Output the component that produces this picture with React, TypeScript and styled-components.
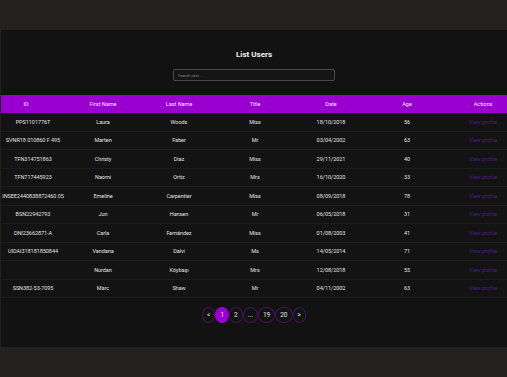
import styled, { createGlobalStyle } from 'styled-components';

const users = [
  { id: 'PPS1101776T', first: 'Laura', last: 'Woods', title: 'Miss', date: '18/10/2018', age: 56 },
  { id: 'SVNR18 010860 F 495', first: 'Marten', last: 'Faber', title: 'Mr', date: '03/04/2002', age: 63 },
  { id: 'TFN314751863', first: 'Christy', last: 'Diaz', title: 'Miss', date: '29/11/2021', age: 40 },
  { id: 'TFN717445923', first: 'Naomi', last: 'Ortiz', title: 'Mrs', date: '16/10/2020', age: 33 },
  { id: 'INSEE2440838872460 05', first: 'Emeline', last: 'Carpentier', title: 'Miss', date: '08/09/2018', age: 78 },
  { id: 'BSN22942793', first: 'Jun', last: 'Hansen', title: 'Mr', date: '06/05/2018', age: 31 },
  { id: 'DNI23662871-A', first: 'Carla', last: 'Fernández', title: 'Miss', date: '01/08/2003', age: 41 },
  { id: 'UIDAI318181850844', first: 'Vandana', last: 'Dalvi', title: 'Ms', date: '14/05/2014', age: 71 },
  { id: '', first: 'Nurdan', last: 'Köybaşı', title: 'Mrs', date: '12/08/2018', age: 55 },
  { id: 'SSN382-53-7095', first: 'Marc', last: 'Shaw', title: 'Mr', date: '04/11/2002', age: 63 }
];

const headers = ['ID', 'First Name', 'Last Name', 'Title', 'Date', 'Age', 'Actions'];
const pages = ['<', '1', '2', '...', '19', '20', '>'];

const GlobalStyle = createGlobalStyle`
  body {
    margin: 0;
    background: #222120;
    font-family: Roboto, "Liberation Sans", sans-serif;
    color: #e4e4e4;
    overflow: hidden;
  }
`;

const App = () => {
  return (
    <>
      <GlobalStyle />
      <TopBand />
      <Panel>
        <Title>List Users</Title>
        <Search placeholder='Search user...' />
        <Table>
          <HeadRow>
            {headers.map((h) => (
              <HeadCell key={h}>{h}</HeadCell>
            ))}
          </HeadRow>
          {users.map((u, i) => (
            <Row key={i}>
              <Cell>{u.id}</Cell>
              <Cell>{u.first}</Cell>
              <Cell>{u.last}</Cell>
              <Cell>{u.title}</Cell>
              <Cell>{u.date}</Cell>
              <Cell>{u.age}</Cell>
              <Cell>
                <ProfileLink>View profile</ProfileLink>
              </Cell>
            </Row>
          ))}
        </Table>
        <Pager>
          {pages.map((p, i) => (
            <PageButton key={i} $active={p === '1'}>
              {p}
            </PageButton>
          ))}
        </Pager>
      </Panel>
    </>
  );
};

export default App;

const TopBand = styled.div`
  height: 30px;
`;

const Panel = styled.div`
  margin-left: 1px;
  height: 317px;
  background: #121212;
  display: flex;
  flex-direction: column;
  align-items: center;
  overflow: hidden;
`;

const Title = styled.div`
  margin-top: 20px;
  height: 10px;
  line-height: 10px;
  font-size: 8px;
  font-weight: 700;
  color: #f2f2f2;
`;

const Search = styled.input`
  box-sizing: border-box;
  margin-top: 9px;
  width: 162px;
  height: 12px;
  padding: 0 4px;
  background: #151515;
  border: 1px solid #4a4a4a;
  border-radius: 2px;
  font-family: inherit;
  font-size: 4px;
  color: #ccc;
  outline: none;

  &::placeholder {
    color: #8a8a8a;
  }
`;

const Table = styled.div`
  margin-top: 14px;
  align-self: flex-start;
  width: 520px;
  flex-shrink: 0;
`;

const HeadRow = styled.div`
  display: grid;
  grid-template-columns: 64px repeat(6, 76px);
  height: 18px;
  align-items: center;
  background: #9900cf;
`;

const HeadCell = styled.div`
  text-align: center;
  font-size: 5.5px;
  color: #f4e6ff;

  &:first-child {
    padding-right: 14px;
  }
`;

const Row = styled.div`
  display: grid;
  grid-template-columns: 64px repeat(6, 76px);
  height: 18.5px;
  box-sizing: border-box;
  align-items: center;
  border-bottom: 1px solid #1d1d1d;
  background: #131313;
`;

const Cell = styled.div`
  text-align: center;
  font-size: 5.5px;
  letter-spacing: -0.05px;
  color: #e2e2e2;
  white-space: nowrap;
`;

const ProfileLink = styled.span`
  color: #501c86;
`;

const Pager = styled.div`
  margin-top: 9px;
  display: flex;
  height: 16px;
`;

const PageButton = styled.div<{ $active: boolean }>`
  box-sizing: border-box;
  min-width: 13px;
  height: 16px;
  padding: 0 4px;
  display: flex;
  align-items: center;
  justify-content: center;
  border: 1px solid ${(p) => (p.$active ? '#9900cf' : '#43135e')};
  border-radius: 50%;
  background: ${(p) => (p.$active ? '#9900cf' : 'transparent')};
  font-size: 6.5px;
  color: #e6e6e6;
`;
